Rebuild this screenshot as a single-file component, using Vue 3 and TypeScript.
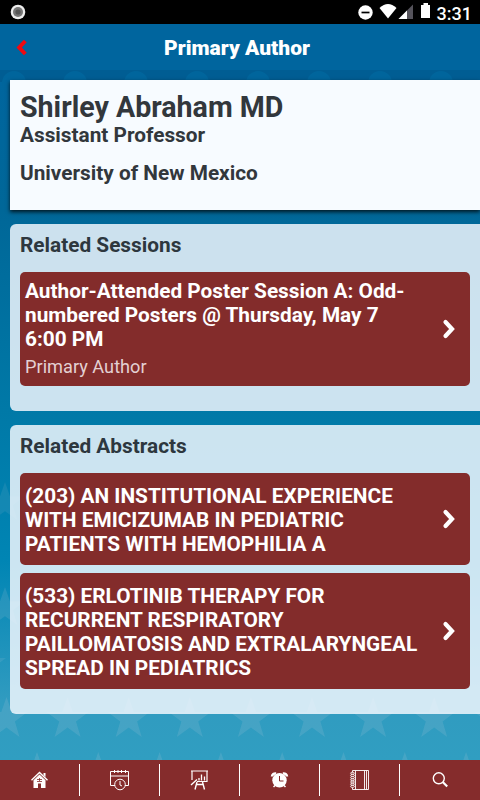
<script setup lang="ts">
interface Star { x: number; y: number; s: number; o: number }

const sessions = [
  { title: 'Author-Attended Poster Session A: Odd-numbered Posters @ Thursday, May 7 6:00 PM', role: 'Primary Author' },
]
const abstracts = [
  { title: '(203) AN INSTITUTIONAL EXPERIENCE WITH EMICIZUMAB IN PEDIATRIC PATIENTS WITH HEMOPHILIA A' },
  { title: '(533) ERLOTINIB THERAPY FOR RECURRENT RESPIRATORY PAILLOMATOSIS AND EXTRALARYNGEAL SPREAD IN PEDIATRICS' },
]

const starPath = 'M0-22 L5.2-7 H21 L8.4 2.4 L13 18 L0 8.6 L-13 18 L-8.4 2.4 L-21-7 H-5.2Z'
const stars: Star[] = []
for (let i = 0; i < 9; i++) {
  stars.push({ x: 6.5 + i * 61.1, y: 719, s: 1, o: 0.15 })
  stars.push({ x: 37 + i * 61.3, y: 774, s: 1, o: 0.15 })
}
stars.push({ x: 5, y: 503, s: 0.95, o: 0.1 })
stars.push({ x: 5, y: 608, s: 0.95, o: 0.14 })
stars.push({ x: -15, y: 665, s: 1, o: 0.12 })
</script>

<template>
  <main class="screen">
    <svg class="stars" viewBox="0 0 480 800" aria-hidden="true">
      <path v-for="(s, i) in stars" :key="i" :d="starPath" :transform="`translate(${s.x} ${s.y}) scale(${s.s})`" fill="#c1cedb" :opacity="s.o" />
      <g class="arches">
        <rect y="70" width="480" height="12" />
        <circle v-for="n in 8" :key="n" :cx="n * 61 - 47" cy="83" r="12" />
      </g>
    </svg>

    <div class="status">
      <svg class="record" width="16" height="16" viewBox="0 0 16 16"><circle cx="8" cy="8" r="7.3" fill="#eee" /><circle cx="8" cy="8" r="5" fill="#777" /><circle cx="8" cy="8" r="2.6" fill="#555" /></svg>
      <svg class="signals" width="76" height="24" viewBox="0 0 76 24">
        <circle cx="8.5" cy="12.5" r="7.2" fill="#fff" /><path d="M4.500 12.500h8" stroke="#000" stroke-width="1.700" />
        <path d="M22.500 7.500Q31-.5 39.500 7.500L31 18.200Z" fill="#fff" transform="translate(0 .4)" />
        <path d="M41.500 19 56 4.500V19Z" fill="#55535b" /><path d="M41.500 19 50 10.500V19Z" fill="#fff" />
        <path d="M64 5h2.500V3h4.500v2H73v13H64Z" fill="#fff" />
      </svg>
      <span class="clock">3:31</span>
    </div>

    <header class="topbar">
      <svg class="back" width="12" height="18" viewBox="0 0 12 18"><path d="M10.300 2 4.200 8.500 10.300 15" fill="none" stroke="#f00910" stroke-width="4" /></svg>
      <h1>Primary Author</h1>
    </header>

    <section class="profile">
      <h2>Shirley Abraham MD</h2>
      <p>Assistant Professor</p>
      <p class="org">University of New Mexico</p>
    </section>

    <section class="group sessions">
      <h3>Related Sessions</h3>
      <a v-for="item in sessions" :key="item.title" class="item session">
        <div class="copy"><strong>{{ item.title }}</strong><span>{{ item.role }}</span></div>
        <svg class="chevron" width="14" height="22" viewBox="0 0 14 22"><path d="M3.500 4 10 11 3.500 18" /></svg>
      </a>
    </section>

    <section class="group abstracts">
      <h3>Related Abstracts</h3>
      <a v-for="item in abstracts" :key="item.title" class="item">
        <div class="copy"><strong>{{ item.title }}</strong></div>
        <svg class="chevron" width="14" height="22" viewBox="0 0 14 22"><path d="M3.500 4 10 11 3.500 18" /></svg>
      </a>
    </section>

    <nav class="tabs">
      <a>
        <svg viewBox="0.5 0 24 24"><path d="M4 12.300 12 4.500l8 7.800" stroke-width="1.400" /><path class="solid" d="M6 12.300 12 6.500l6 5.800V20h-4.500v-4.500h-3V20H6Z" /><path class="solid" d="M16 5h2v4l-2-2Z" /><path d="M9.500 11.500h5M12 10v3M9.500 13.500h5" stroke="#852c2c" stroke-width=".8" /></svg>
      </a>
      <a>
        <svg viewBox="0 0 24 24"><path d="M7 17.500H2.500v-14h18v14H17M2.500 8h18M6.500 2v3M10 2v3M13.500 2v3M17.500 2v3" /><circle cx="12" cy="16.500" r="5.300" /><path d="M12 13v4l2 1" /></svg>
      </a>
      <a>
        <svg viewBox="0.5 0 24 24"><path d="M4.500 12V3h15v10.500H9.500M3.500 3h17" stroke-width="1.200" /><path d="M3.500 17 9.500 11.500M9.500 14 7.500 21.500M15 14l2 7.500M8.500 16.500h7" stroke-width="1.400" /><path d="M11.500 12.500V10M14 12.500V6.500M17 12.500V8.500" stroke-width="1.300" /></svg>
      </a>
      <a>
        <svg viewBox="0.5 0 24 24"><circle class="solid" cx="12" cy="12.300" r="7.200" /><path d="M4.500 8.500A3.300 3.300 0 0 1 8.500 5.500M19.500 8.500A3.300 3.300 0 0 0 15.500 5.500" stroke-width="2.500" /><path d="M7.500 17.500 6 19M16.500 17.500l1.500 1.500" stroke-width="1.500" /><path d="M12 8v5h4" stroke="#852c2c" /></svg>
      </a>
      <a>
        <svg viewBox="0 0 24 24"><path d="M4.500 4.500V2.500h16v19h-16v-2M7.500 2.500v19M16.500 2.500v19M18.500 2.500v19" stroke-width=".9" /><ellipse v-for="n in 7" :key="n" cx="4.500" :cy="3 + n * 2.200" rx="2" ry="1" stroke-width=".8" /></svg>
      </a>
      <a>
        <svg viewBox="0 0 24 24"><circle cx="10.800" cy="10.300" r="5.500" stroke-width="1.400" /><path d="m14.700 14 4.500 4.500" stroke-width="2.200" /></svg>
      </a>
    </nav>
  </main>
</template>

<style>
body { margin: 0; }
</style>

<style scoped>
* { box-sizing: border-box; }
.screen {
  position: relative; width: 480px; height: 800px; overflow: hidden;
  display: flex; flex-direction: column;
  font-family: Roboto, "Liberation Sans", sans-serif;
  background: linear-gradient(#00659e 70px, #006798 210px, #0079a7 410px, #0085b4 560px, #309bc0 700px, #309ec1 760px);
}
.screen > :not(.stars) { position: relative; flex-shrink: 0; }
.screen > .stars { position: absolute; inset: 0; }
.arches { fill: #005b8f; opacity: .7; }
.arches circle { fill: #01669c; }
h1, h2, h3, p { margin: 0; }
.status { height: 24px; background: #000; color: #fff; display: flex; align-items: center; padding: 0 8px 0 10px; }
.signals { margin-left: auto; }
.clock { font-size: 18px; line-height: 24px; font-weight: 500; padding-top: 3px; margin-left: 4px; }
.topbar { height: 56px; display: grid; grid-template-columns: 15px 414px; padding: 0 6px 8px 15px; align-items: center; }
h1 { color: #fff; font-size: 21px; line-height: 24px; font-weight: 900; text-align: center; }
.profile { height: 130px; margin-left: 10px; padding: 10px; background: #f7fbff; color: #32373c; box-shadow: 0 2px 4px rgba(0, 0, 0, .8); }
h2 { font-size: 28.6px; line-height: 34px; font-weight: 700; }
.profile p { font-size: 20.8px; line-height: 24px; font-weight: 700; margin-top: -1px; }
.profile .org { margin-top: 14px; }
.group { margin: 14px 0 0 10px; padding: 9px 10px; background: rgba(243, 248, 254, .84); border-radius: 6px 0 0 6px; }
.sessions { height: 187px; }
.abstracts { height: 289px; }
h3 { color: #2d373e; font-size: 20.8px; line-height: 24px; font-weight: 700; margin-bottom: 15px; }
.item { display: flex; align-items: center; min-height: 92px; padding: 11px 14px 9px 5px; background: #832c2b; color: #fff; border-radius: 5px; }
.item + .item { margin-top: 8px; }
.item.session { height: 114px; padding-top: 7px; padding-bottom: 7px; }
.copy { width: 396px; flex: none; font-size: 20.8px; line-height: 24px; }
.copy strong { display: block; font-weight: 700; }
.copy span { display: block; font-size: 18.2px; line-height: 24px; padding-top: 4px; color: #e3d0d2; }
.chevron { margin-left: auto; flex: none; }
.item:not(.session) .chevron { margin-bottom: 2px; }
.chevron path { fill: none; stroke: #fff; stroke-width: 4.2; stroke-linecap: round; }
.tabs { height: 40px; margin-top: auto; display: grid; grid-template-columns: repeat(6, 1fr); background: #852c2c; }
.tabs a { display: grid; place-items: center; position: relative; }
.tabs a:not(:last-child)::after { content: ""; position: absolute; right: 0; top: 4px; width: 1px; height: 32px; background: #fff; }
.tabs svg { width: 24px; height: 24px; fill: none; stroke: #fff; stroke-width: 1; }
.tabs .solid { fill: #fff; stroke: none; }
</style>
